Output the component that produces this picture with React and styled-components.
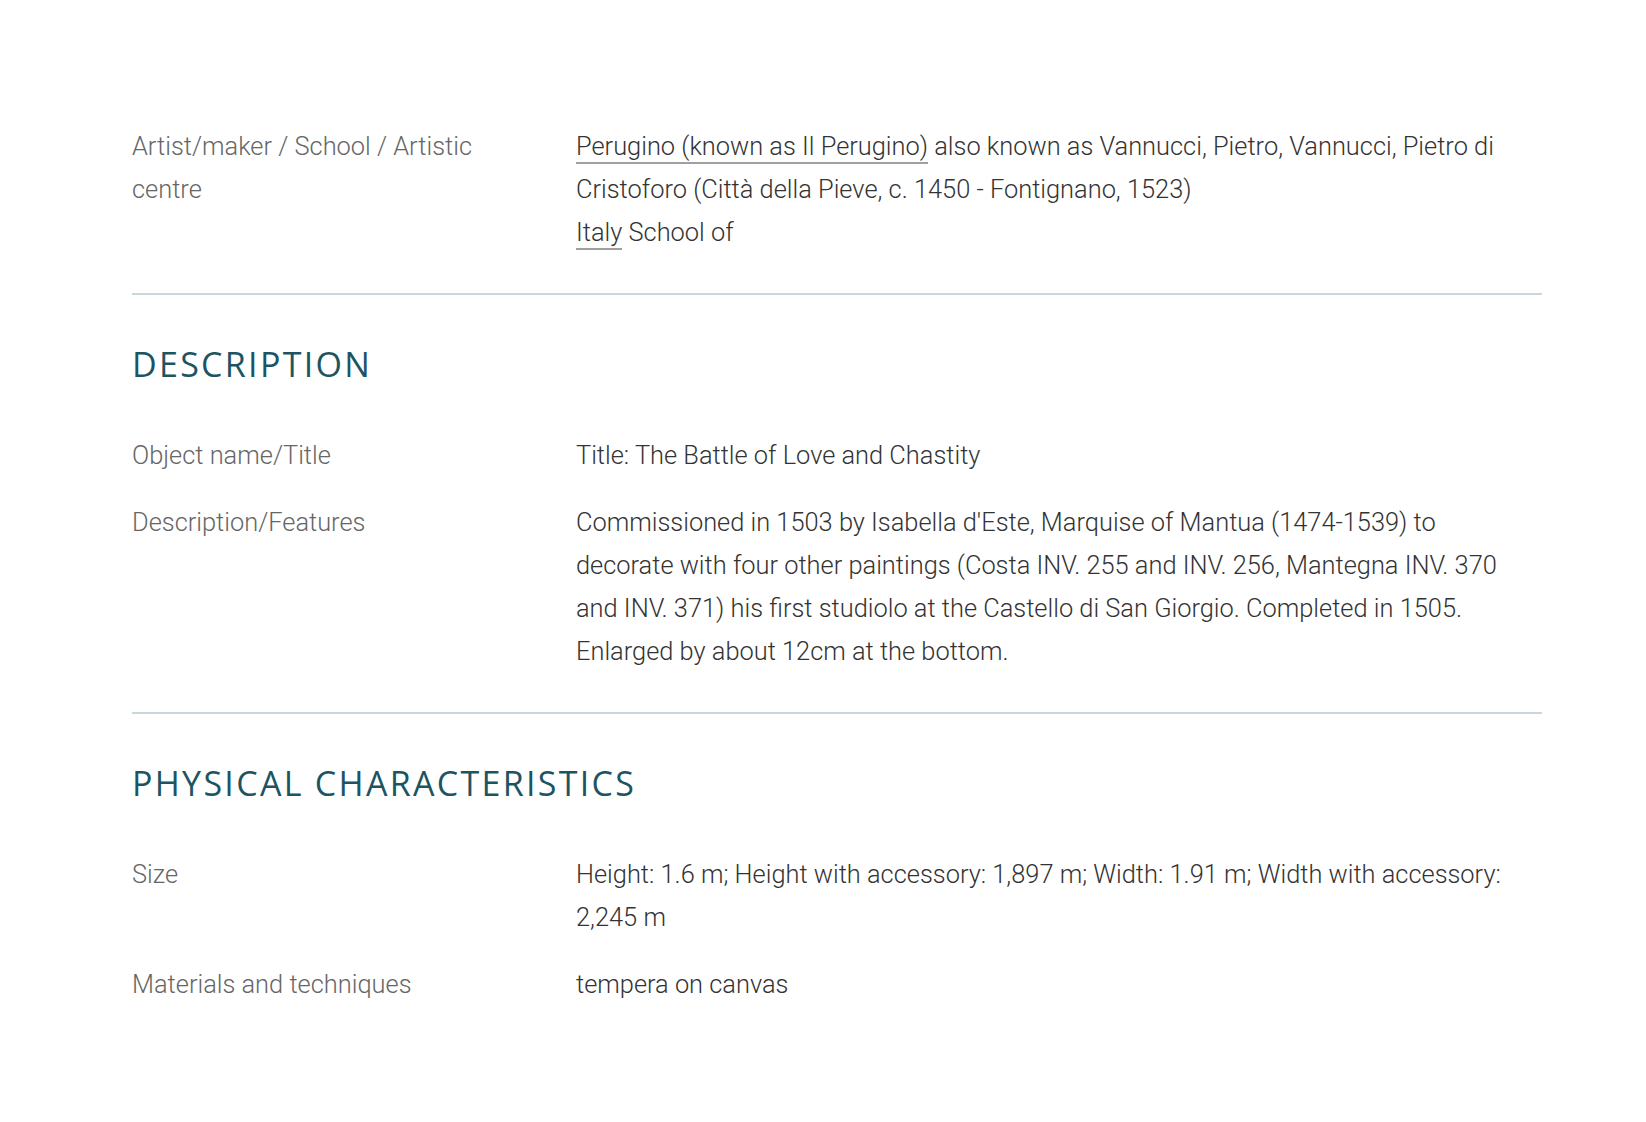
import React from "react";
import styled, { createGlobalStyle } from "styled-components";

const GlobalStyle = createGlobalStyle`
  body {
    margin: 0;
    background: #ffffff;
    font-family: Roboto, "Liberation Sans", sans-serif;
  }
`;

const Page = styled.div`
  padding: 125px 0 120px 132px;
`;

const Wrapper = styled.div`
  width: 1410px;
`;

const Section = styled.section`
  padding-bottom: 39px;
  border-bottom: ${(p) => (p.last ? "none" : "2px solid #c8d7dc")};
  & + & {
    padding-top: 49px;
  }
`;

const Heading = styled.h2`
  margin: 0 0 50px;
  font-family: "Open Sans", "Liberation Sans", sans-serif;
  font-weight: 400;
  font-size: 34px;
  line-height: 40px;
  letter-spacing: 2.3px;
  color: #1d5462;
  text-transform: uppercase;
`;

const Rows = styled.dl`
  margin: 0;
  display: flex;
  flex-direction: column;
  gap: 24px;
`;

const Row = styled.div`
  display: grid;
  grid-template-columns: 444px 1fr;
  font-size: 25.4px;
  line-height: 43px;
  font-weight: 300;
`;

const Label = styled.dt`
  color: #666666;
  padding-right: 60px;
`;

const Value = styled.dd`
  margin: 0;
  color: #333333;
  padding-right: 36px;
`;

const Link = styled.a`
  color: inherit;
  text-decoration: none;
  border-bottom: 2px solid #a0a0a0;
  padding-bottom: 1px;
`;

const sections = [
  {
    rows: [
      {
        label: "Artist/maker / School / Artistic centre",
        value: (
          <>
            <Link href="#">Perugino (known as Il Perugino)</Link> also known as
            Vannucci, Pietro, Vannucci, Pietro di Cristoforo (Città della Pieve,
            c. 1450 - Fontignano, 1523)
            <br />
            <Link href="#">Italy</Link> School of
          </>
        ),
      },
    ],
  },
  {
    title: "Description",
    rows: [
      { label: "Object name/Title", value: "Title: The Battle of Love and Chastity" },
      {
        label: "Description/Features",
        value:
          "Commissioned in 1503 by Isabella d'Este, Marquise of Mantua (1474-1539) to decorate with four other paintings (Costa INV. 255 and INV. 256, Mantegna INV. 370 and INV. 371) his first studiolo at the Castello di San Giorgio. Completed in 1505. Enlarged by about 12cm at the bottom.",
      },
    ],
  },
  {
    title: "Physical characteristics",
    rows: [
      {
        label: "Size",
        value:
          "Height: 1.6 m; Height with accessory: 1,897 m; Width: 1.91 m; Width with accessory: 2,245 m",
      },
      { label: "Materials and techniques", value: "tempera on canvas" },
    ],
  },
];

export default function App() {
  return (
    <Page>
      <GlobalStyle />
      <Wrapper>
        {sections.map((s, i) => (
          <Section key={i} last={i === sections.length - 1}>
            {s.title && <Heading>{s.title}</Heading>}
            <Rows>
              {s.rows.map((r) => (
                <Row key={r.label}>
                  <Label>{r.label}</Label>
                  <Value>{r.value}</Value>
                </Row>
              ))}
            </Rows>
          </Section>
        ))}
      </Wrapper>
    </Page>
  );
}
